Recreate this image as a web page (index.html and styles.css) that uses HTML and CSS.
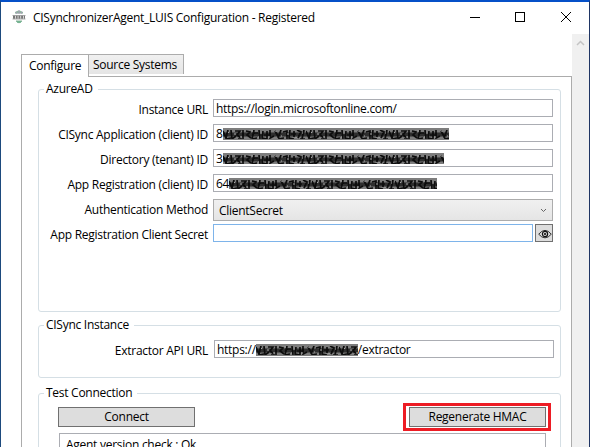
FILE: index.html
```
<!DOCTYPE html>
<html lang="en">
	<head>
		<meta charset="UTF-8">
		<meta name="viewport" content="width=device-width, initial-scale=1.0">
		<title>CISynchronizerAgent_LUIS Configuration - Registered</title>
		<link rel="stylesheet" href="styles.css">
	</head>
	<body>
		<!-- shared fill for the blacked out values -->
		<svg class="defs" width="0" height="0">
			<defs>
				<filter id="soft" x="0" y="0" width="1" height="1"><feGaussianBlur stdDeviation="0.6"/></filter>
				<pattern id="scribble" width="83" height="13" patternUnits="userSpaceOnUse">
					<rect width="83" height="13" fill="#7d7d7d"/>
					<g filter="url(#soft)" fill="none" stroke="#0a0a0a">
						<path d="M0 6.500h83" stroke="#2e2e2e" stroke-width="4"/>
						<path d="M0 3l3 7 2-8M8 2l1 9 4-3M12 3h5l-3 4 4 3M20 2v9M23 3l4 1-3 3 4 3M31 2l-2 9 5-1M36 2l1 9M40 3l-1 7 5 1V3M47 2v8l4-2M52 3l4 7M58 2l-3 8M60 4l4-1v8M67 2l-1 8 5 1M71 3v6M74 2l4 2-3 6M81 2l-2 9" stroke-width="1.700"/>
						<path d="M3 11l5-1M15 11h4M30 5h5M41 7h5M55 11l6-1M68 6h5M77 11h5" stroke-width="1.500"/>
					</g>
					<path d="M5 4l1 1M11 6h2M18 8v2M28 3h2M35 9h1M38 4v2M45 9h2M53 3v1M58 8h1M65 5v2M73 9v1M79 5h1" stroke="#aaa"/>
				</pattern>
			</defs>
		</svg>
		<div class="window">
			<div class="titlebar">
				<svg class="app-icon" width="14" height="14" viewBox="0 0 14 14">
					<path d="M3 3q4-4 8 0zM4 11q3 3.500 6 0z" fill="#8fb5a0" stroke="#8ab79b"/>
					<path d="M4 1.500l1 2.500M10 1.500l-1 2.500M7 0v4" stroke="#a99ab8" fill="none"/>
					<path d="M5 12h4" stroke="#5fae86"/>
					<path d="M0.500 5.500h13M0.500 9h13" stroke="#aaa"/>
					<path d="M1 7.200h12" stroke="#777" stroke-width="3" stroke-dasharray="2 0.700"/>
				</svg>
				<span class="title">CISynchronizerAgent_LUIS Configuration - Registered</span>
				<svg class="window-buttons" width="102" height="12" viewBox="0 0 102 12" shape-rendering="crispEdges">
					<path d="M0 6.500h10" stroke="#000"/>
					<rect x="45.500" y="1.500" width="9" height="9" fill="none" stroke="#000"/>
					<path d="M91 1l10 10M101 1l-10 10" stroke="#000" shape-rendering="auto"/>
				</svg>
			</div>
			<div class="main">
				<div class="content">
					<div class="tabs">
						<div class="tab active">Configure</div>
						<div class="tab">Source Systems</div>
					</div>
					<div class="panel">
						<fieldset class="group azure">
							<legend>AzureAD</legend>
							<div class="row">
								<label>Instance URL</label>
								<div class="field url">https://login.microsoftonline.com/</div>
							</div>
							<div class="row">
								<label>CISync Application (client) ID</label>
								<div class="field">8<svg class="mask" width="226" height="12"><rect width="226" height="12" fill="url(#scribble)"/></svg></div>
							</div>
							<div class="row">
								<label>Directory (tenant) ID</label>
								<div class="field">3<svg class="mask" width="221" height="11"><rect width="221" height="11" fill="url(#scribble)"/></svg></div>
							</div>
							<div class="row">
								<label>App Registration (client) ID</label>
								<div class="field">64<svg class="mask" width="208" height="11"><rect width="208" height="11" fill="url(#scribble)"/></svg></div>
							</div>
							<div class="row select-row">
								<label>Authentication Method</label>
								<div class="select">
									<span>ClientSecret</span>
									<svg width="7" height="5" viewBox="0 0 7 5"><path d="M1 1l2.500 2.500L6 1" fill="none" stroke="#666"/></svg>
								</div>
							</div>
							<div class="row">
								<label>App Registration Client Secret</label>
								<div class="field focused"></div>
								<div class="eye">
									<svg width="14" height="12" viewBox="0 0 14 12">
										<path d="M0.700 6.200Q7-1.500 13.300 6.200Q7 13.500 0.700 6.200z" fill="none" stroke="#333"/>
										<circle cx="7" cy="6" r="2.600" fill="#ddd" stroke="#111" stroke-width="1.200"/>
										<circle cx="7" cy="6" r="1" fill="#000"/>
									</svg>
								</div>
							</div>
						</fieldset>
						<fieldset class="group instance">
							<legend>CISync Instance</legend>
							<div class="row">
								<label>Extractor API URL</label>
								<div class="field">https://<svg class="mask" width="102" height="12"><rect width="102" height="12" fill="url(#scribble)"/></svg>/extractor</div>
							</div>
						</fieldset>
						<fieldset class="group test">
							<legend>Test Connection</legend>
							<div class="buttons">
								<div class="button">Connect</div>
								<div class="highlight"><div class="button">Regenerate HMAC</div></div>
							</div>
							<div class="log">Agent version check : Ok</div>
						</fieldset>
					</div>
				</div>
				<div class="scrollbar">
					<svg width="9" height="6" viewBox="0 0 9 6"><path d="M1 5l3.500-3.500L8 5" fill="none" stroke="#c4c4c4" stroke-width="1.500"/></svg>
				</div>
			</div>
		</div>
	</body>
</html>
```

FILE: styles.css
```
* {
	box-sizing: border-box;
}
body {
	margin: 0;
	font-family: "Open Sans", "Noto Sans", sans-serif;
	font-size: 12px;
	line-height: 16px;
	color: #000;
	letter-spacing: -0.27px;
	white-space: nowrap;
}
.defs {
	display: block;
}
.window {
	width: 590px;
	height: 447px;
	overflow: hidden;
	background: #fff;
	border: 1px solid #1d4a7d;
	border-top: 2px solid #0550c8;
	border-right-color: #1f3564;
	border-bottom: none;
	display: flex;
	flex-direction: column;
}
.titlebar {
	height: 32px;
	flex: none;
	display: flex;
	align-items: center;
	padding: 0 17px 2px 11px;
}
.title {
	margin-left: 7px;
	padding-top: 2px;
}
.window-buttons {
	margin-left: auto;
}
.main {
	flex: 1;
	display: flex;
	min-height: 0;
}
.content {
	flex: 1;
	padding: 20px 0 0 20px;
}
.tabs {
	display: flex;
	align-items: flex-start;
	height: 22px;
}
.tab {
	width: 95px;
	height: 20px;
	padding: 2px 0 0 4px;
	border: 1px solid #acacac;
	border-left: none;
	border-bottom: none;
	background: linear-gradient(#f0f0f0, #e5e5e5);
}
.tab.active {
	width: 68px;
	height: 23px;
	padding: 3px 0 0 7px;
	border-left: 1px solid #acacac;
	background: #fff;
	z-index: 1;
}
.panel {
	height: 400px;
	border: 1px solid #acacac;
	padding: 4px 10px 0 16px;
}
.group {
	margin: 0;
	min-width: 0;
	border: 1px solid #d5dfe5;
	border-radius: 3px;
}
legend {
	height: 16px;
	margin-left: -5px;
	padding: 0 5px 0 2px;
}
.azure {
	height: 231px;
	padding: 2px 7px 0 10px;
}
.instance {
	height: 61px;
	margin-top: 5px;
	padding: 7px 6px 0 10px;
}
.test {
	height: 120px;
	margin-top: 7px;
	padding: 2px 9px 0 19px;
}
.test legend {
	margin-left: -14px;
}
.row {
	display: flex;
	height: 18px;
	margin-bottom: 7px;
}
.row label {
	flex: none;
	width: 159px;
	margin-right: 5px;
	padding-top: 3px;
	text-align: right;
}
.instance .row label {
	margin-right: 6px;
}
.field {
	flex: 1;
	display: flex;
	align-items: center;
	height: 18px;
	padding: 1px 0 0 2px;
	border: 1px solid #abadb3;
}
.field.url {
	letter-spacing: -0.3px;
}
.field.focused {
	border-color: #7eb4ea;
}
.select-row {
	height: 22px;
	margin-bottom: 3px;
}
.select {
	flex: 1;
	display: flex;
	align-items: center;
	justify-content: space-between;
	padding: 1px 5px 0 5px;
	border: 1px solid #acacac;
	background: linear-gradient(#f0f0f0, #e5e5e5);
}
.eye {
	width: 18px;
	height: 18px;
	margin-left: 2px;
	padding: 3px 0 0 2px;
	border: 1px solid #707070;
	background: #ddd;
}
.eye svg {
	display: block;
}
.buttons {
	display: flex;
	justify-content: space-between;
	height: 28px;
}
.button {
	width: 137px;
	height: 20px;
	line-height: 18px;
	text-align: center;
	border: 1px solid #707070;
	background: #ddd;
}
.buttons > .button {
	margin-top: 4px;
}
.highlight {
	width: 148px;
	height: 28px;
	padding: 1px 0 0 3px;
	border: 3px solid #ed1c24;
}
.log {
	height: 80px;
	margin: 2px 5px 0 1px;
	padding: 3px 6px;
	border: 1px solid #abadb3;
}
.scrollbar {
	width: 17px;
	background: #f0f0f0;
	text-align: center;
}
.scrollbar svg {
	display: block;
	margin: 6px 0 0 4px;
}
```
